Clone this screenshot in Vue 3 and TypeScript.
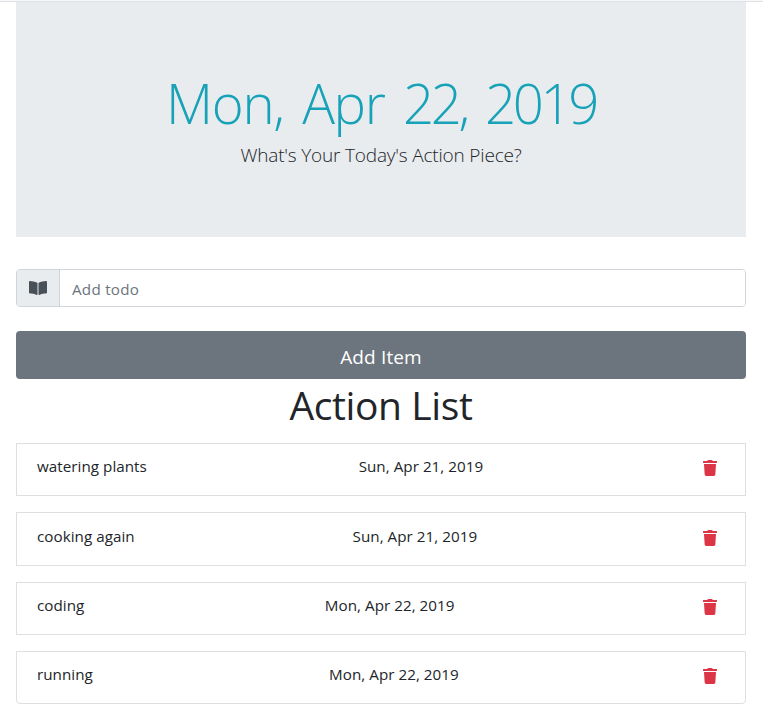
<script setup lang="ts">
import { ref } from 'vue'

interface Todo {
  id: number
  title: string
  date: string
}

const today = 'Mon, Apr 22, 2019'
const todayParts = today.split(' ').map((text) => ({ text, numeric: /^\d/.test(text) }))
const draft = ref('')
const todos = ref<Todo[]>([
  { id: 1, title: 'watering plants', date: 'Sun, Apr 21, 2019' },
  { id: 2, title: 'cooking again', date: 'Sun, Apr 21, 2019' },
  { id: 3, title: 'coding', date: 'Mon, Apr 22, 2019' },
  { id: 4, title: 'running', date: 'Mon, Apr 22, 2019' },
])

function addItem() {
  const title = draft.value.trim()
  if (!title) return
  todos.value.push({ id: Date.now(), title, date: today })
  draft.value = ''
}

function removeItem(id: number) {
  todos.value = todos.value.filter((t) => t.id !== id)
}
</script>

<template>
  <main class="page">
    <header class="hero">
      <h1 class="hero-date">
        <template v-for="(part, i) in todayParts" :key="i">{{ i ? ' ' : '' }}<span :class="{ numeric: part.numeric }">{{ part.text }}</span></template>
      </h1>
      <p class="hero-lead">What's Your Today's Action Piece?</p>
    </header>

    <form class="form" @submit.prevent="addItem">
      <div class="input-group">
        <span class="addon">
          <svg class="book" viewBox="0 0 576 512" aria-hidden="true">
            <path d="M542.22 32.05c-54.8 3.11-163.72 14.43-230.96 55.59-4.64 2.84-7.27 7.89-7.27 13.17v363.87c0 11.55 12.63 18.85 23.28 13.49 69.18-34.82 169.23-44.32 218.7-46.92 16.89-.89 30.02-14.43 30.02-30.66V62.75c.01-17.71-15.35-31.74-33.77-30.7zM264.73 87.64C197.5 46.48 88.58 35.17 33.78 32.05 15.36 31.01 0 45.04 0 62.75V400.6c0 16.24 13.13 29.78 30.02 30.66 49.49 2.6 149.59 12.11 218.77 46.95 10.62 5.35 23.21-1.94 23.21-13.46V100.63c0-5.29-2.62-10.14-7.27-12.99z" />
          </svg>
        </span>
        <input v-model="draft" class="field" type="text" placeholder="Add todo" />
      </div>
      <button class="add" type="submit">Add Item</button>
    </form>

    <h2 class="list-title">Action List</h2>
    <ul class="list">
      <li v-for="todo in todos" :key="todo.id" class="item">
        <span class="name">{{ todo.title }}</span>
        <span class="date">{{ todo.date }}</span>
        <button class="remove" type="button" aria-label="Delete" @click="removeItem(todo.id)">
          <svg class="trash" viewBox="0 0 448 512" aria-hidden="true">
            <path d="M432 32H312l-9.400-18.700A24 24 0 0 0 281.100 0H166.800a23.720 23.720 0 0 0-21.400 13.300L136 32H16A16 16 0 0 0 0 48v32a16 16 0 0 0 16 16h416a16 16 0 0 0 16-16V48a16 16 0 0 0-16-16zM53.200 467a48 48 0 0 0 47.900 45h245.800a48 48 0 0 0 47.900-45L416 128H32z" />
          </svg>
        </button>
      </li>
    </ul>
  </main>
</template>

<style>
body {
  background: #fff;
}
</style>

<style scoped>
.page {
  box-sizing: border-box;
  height: 725px;
  padding: 0 17px 0 16px;
  border-top: 1px solid #f8f8f8;
  box-shadow: inset 0 1px 0 #dee2e6;
  color: #212529;
  font-family: 'Open Sans', 'Noto Sans', sans-serif;
  font-size: 15.2px;
  line-height: 24px;
}

.hero {
  box-sizing: border-box;
  height: 235px;
  margin-top: 1px;
  padding-top: 68px;
  background: #e9ecef;
  text-align: center;
}

.hero-date {
  margin: 0 0 7px;
  color: #17a2b8;
  font-size: 54.5px;
  font-weight: 300;
  line-height: 67px;
  letter-spacing: -1.3px;
  word-spacing: 5.5px;
}

.numeric {
  letter-spacing: -3.4px;
}

.hero-lead {
  margin: 0;
  font-size: 19px;
  font-weight: 300;
  line-height: 22px;
  letter-spacing: -0.18px;
}

.form {
  margin-top: 32px;
}

.input-group {
  box-sizing: border-box;
  display: flex;
  height: 38px;
  border: 1px solid #ced4da;
  border-radius: 4px;
  overflow: hidden;
}

.addon {
  box-sizing: border-box;
  display: flex;
  align-items: center;
  justify-content: center;
  width: 43px;
  border-right: 1px solid #ced4da;
  background: #e9ecef;
  color: #495057;
}

.book {
  width: 18px;
  height: 16px;
  fill: currentColor;
}

.field {
  flex: 1;
  min-width: 0;
  padding: 1px 12px 0;
  border: 0;
  outline: 0;
  background: #fff;
  color: #495057;
  font: inherit;
  letter-spacing: 0.25px;
}

.field::placeholder {
  color: #6c757d;
  opacity: 1;
}

.add {
  display: block;
  width: 100%;
  height: 48px;
  margin-top: 24px;
  padding: 4px 0 0;
  border: 0;
  border-radius: 4px;
  background: #6c757d;
  color: #fff;
  font: inherit;
  font-size: 19px;
  letter-spacing: 0.15px;
}

.list-title {
  margin: 2px 0 14px;
  font-size: 39px;
  font-weight: 400;
  line-height: 48px;
  letter-spacing: -0.4px;
  text-align: center;
}

.list {
  display: flex;
  flex-direction: column;
  gap: 16px;
  margin: 0;
  padding: 0;
  list-style: none;
}

.item {
  box-sizing: border-box;
  display: flex;
  align-items: flex-start;
  justify-content: space-between;
  height: 53.33px;
  padding: 10.3px 20px 0;
  border: 1px solid #dfdfdf;
}

.item:last-child {
  border-radius: 0 0 4px 4px;
}

.name,
.date {
  letter-spacing: 0.04px;
  white-space: nowrap;
}

.remove {
  display: flex;
  justify-content: center;
  width: 30px;
  padding: 6.1px 0 0;
  border: 0;
  background: none;
  color: #dc3545;
}

.trash {
  width: 14px;
  height: 16px;
  fill: currentColor;
}
</style>
